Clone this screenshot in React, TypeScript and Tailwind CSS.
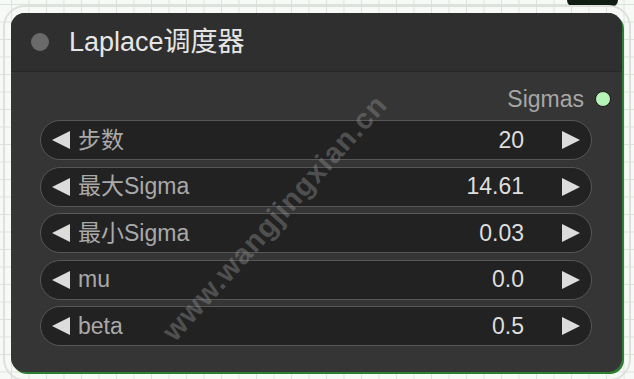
import React from 'react';

interface Widget {
  label: string;
  value: string;
}

const WIDGETS: Widget[] = [
  { label: '步数', value: '20' },
  { label: '最大Sigma', value: '14.61' },
  { label: '最小Sigma', value: '0.03' },
  { label: 'mu', value: '0.0' },
  { label: 'beta', value: '0.5' },
];

const FONT = "font-['Liberation_Sans','Noto_Sans_CJK_SC',sans-serif]";

const Arrow: React.FC<{ dir: 'left' | 'right' }> = ({ dir }) => (
  <svg width="20" height="20" viewBox="0 0 20 20" className="shrink-0">
    {dir === 'left' ? (
      <polygon points="19,1 19,19 1,10" fill="#dcdcdc" />
    ) : (
      <polygon points="1,1 1,19 19,10" fill="#dcdcdc" />
    )}
  </svg>
);

const NumberWidget: React.FC<Widget> = ({ label, value }) => (
  <div className="flex items-center h-[40px] rounded-full bg-[#222222] border-[1.5px] border-[#575757] pl-[10px] pr-[10px]">
    <Arrow dir="left" />
    <span className="ml-[7px] text-[23px] text-[#a9a9a9] leading-none">{label}</span>
    <span className="ml-auto text-[23px] text-[#dedede] leading-none">{value}</span>
    <span className="ml-[37px]">
      <Arrow dir="right" />
    </span>
  </div>
);

const App: React.FC = () => {
  return (
    <div
      className={`relative w-[634px] h-[379px] overflow-hidden bg-[#f7f9f7] bg-[linear-gradient(to_right,#dbe4db_1px,transparent_1px),linear-gradient(to_bottom,#dbe4db_1px,transparent_1px)] bg-[size:17.5px_17.5px] bg-[position:11px_4px] ${FONT}`}
    >
      {/* dark badge peeking from top */}
      <div className="absolute left-[567px] top-[-10px] w-[51px] h-[17px] rounded-[7px] bg-[#0f1d13]" />

      {/* selection outline */}
      <div className="absolute left-[3px] top-[5px] w-[628px] h-[376px] rounded-[22px] border-[2px] border-[#dde0dd]" />

      {/* node */}
      <div className="absolute left-[11px] top-[13px] w-[611px] h-[359px] rounded-[14px] bg-[#353535] shadow-[2px_2px_0_0_#2e7d32] overflow-hidden">
        {/* header */}
        <div className="flex items-center h-[59px] bg-[#2f2f2f] border-b border-[#282828] pl-[20px]">
          <div className="w-[18px] h-[18px] rounded-full bg-[#6a6a6a]" />
          <span className="ml-[20px] text-[27px] text-[#e6e6e6] leading-none">Laplace调度器</span>
        </div>

        {/* output slot */}
        <div className="flex items-center justify-end h-[24px] mt-[15px] pr-[11px]">
          <span className="text-[23px] text-[#a6a6a6] leading-none">Sigmas</span>
          <div className="ml-[11px] w-[16px] h-[16px] rounded-full bg-[#b6f3b6] border-[1.5px] border-[#1b1b1b]" />
        </div>

        {/* widgets */}
        <div className="flex flex-col gap-[6.5px] mt-[9px] pl-[29px] pr-[30px]">
          {WIDGETS.map((w) => (
            <NumberWidget key={w.label} label={w.label} value={w.value} />
          ))}
        </div>
      </div>

      {/* watermark */}
      <div className="absolute left-[275px] top-[218px] -translate-x-1/2 -translate-y-1/2 -rotate-[48deg] whitespace-nowrap text-[29px] font-bold tracking-[1px] text-[#8a8a8a]/45">
        www.wangjingxian.cn
      </div>
    </div>
  );
};

export default App;
